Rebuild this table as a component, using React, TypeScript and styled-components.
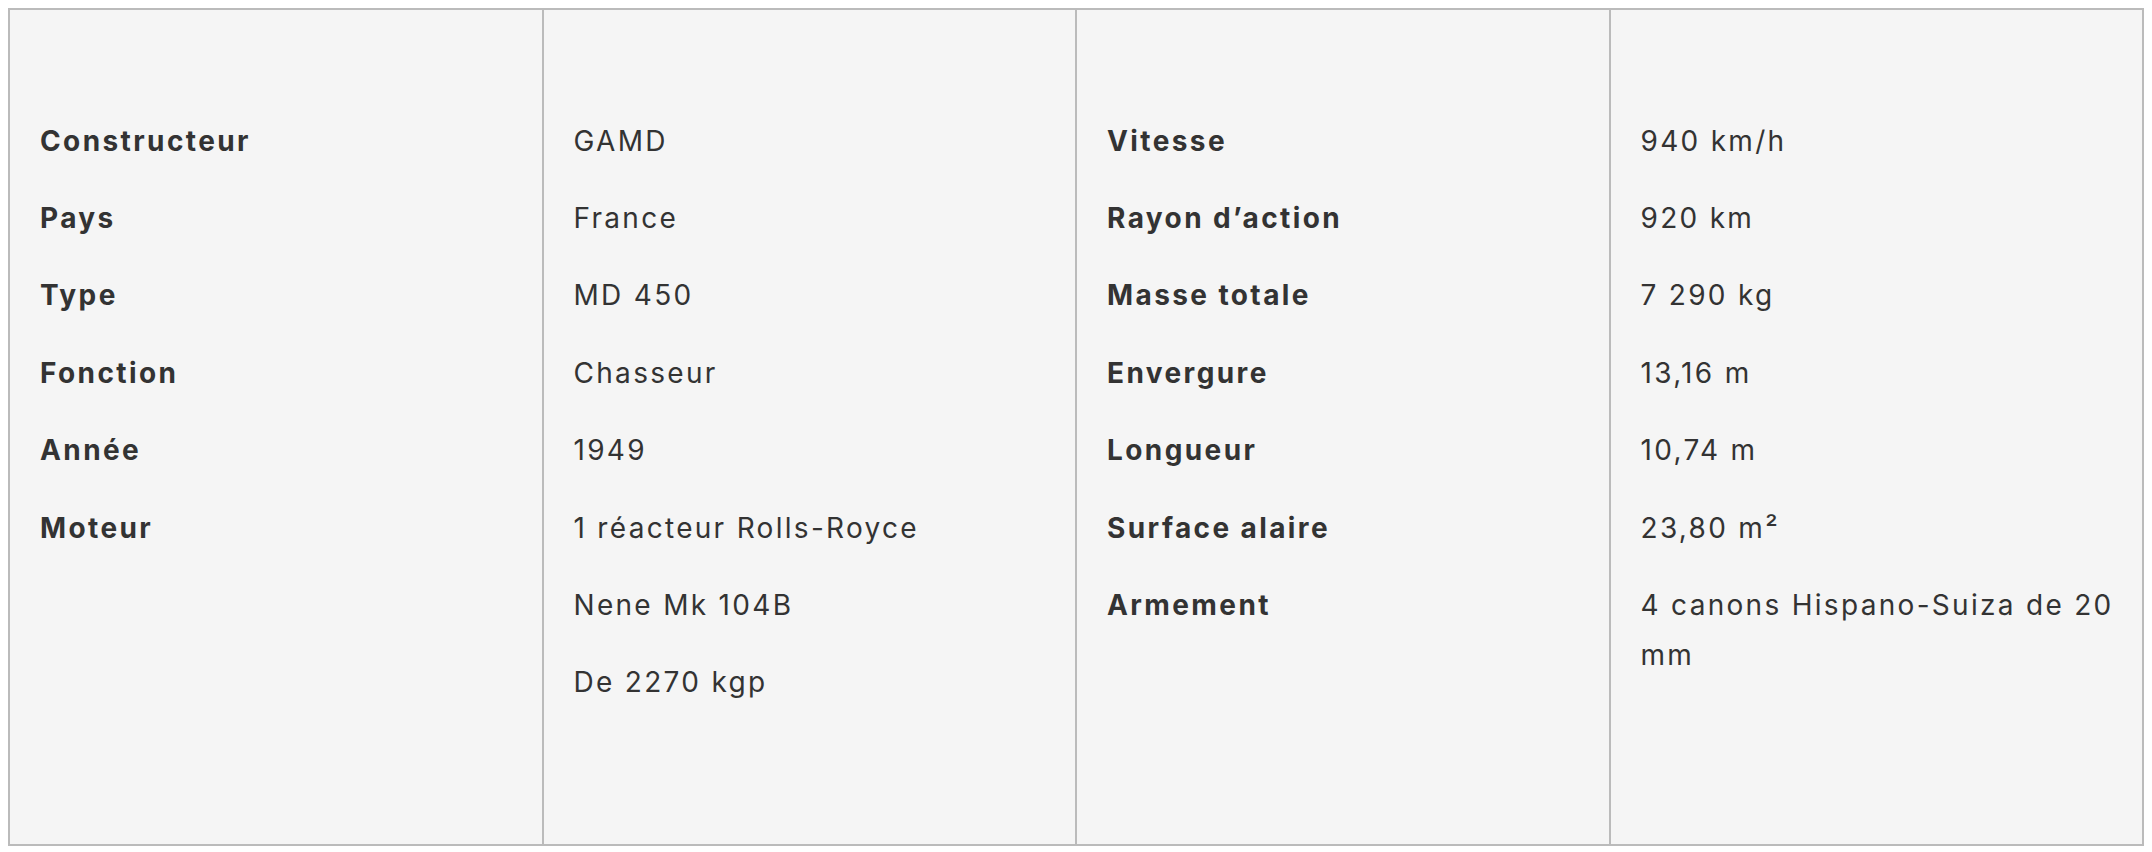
import React from "react";
import styled, { createGlobalStyle } from "styled-components";

const GlobalStyle = createGlobalStyle`
  html, body {
    margin: 0;
    padding: 0;
    background: #ffffff;
  }
  body {
    margin: 8px;
    font-family: Inter, "Noto Sans", "Liberation Sans", sans-serif;
  }
`;

const SpecTable = styled.table`
  width: 100%;
  border-collapse: collapse;
  table-layout: fixed;
  background: #f5f5f5;
  color: #333333;
  font-size: 28px;
  line-height: 50px;
  letter-spacing: 2.2px;
`;

const Cell = styled.td`
  border: 2px solid #bbbbbb;
  vertical-align: top;
  padding: 105.5px 24px 136.5px 30px;
`;

const Line = styled.p<{ $label?: boolean }>`
  margin: 0 0 27.43px;
  font-weight: ${(p) => (p.$label ? 700 : 400)};
  letter-spacing: ${(p) => (p.$label ? "2.4px" : "2.3px")};
  &:last-child {
    margin-bottom: 0;
  }
`;

type Col = { label: boolean; lines: string[] };

const columns: Col[] = [
  {
    label: true,
    lines: ["Constructeur", "Pays", "Type", "Fonction", "Année", "Moteur"],
  },
  {
    label: false,
    lines: [
      "GAMD",
      "France",
      "MD 450",
      "Chasseur",
      "1949",
      "1 réacteur Rolls-Royce",
      "Nene Mk 104B",
      "De 2270 kgp",
    ],
  },
  {
    label: true,
    lines: [
      "Vitesse",
      "Rayon d’action",
      "Masse totale",
      "Envergure",
      "Longueur",
      "Surface alaire",
      "Armement",
    ],
  },
  {
    label: false,
    lines: [
      "940 km/h",
      "920 km",
      "7 290 kg",
      "13,16 m",
      "10,74 m",
      "23,80 m²",
      "4 canons Hispano-Suiza de 20 mm",
    ],
  },
];

export default function App() {
  return (
    <>
      <GlobalStyle />
      <SpecTable>
        <tbody>
          <tr>
            {columns.map((col, i) => (
              <Cell key={i}>
                {col.lines.map((l) => (
                  <Line key={l} $label={col.label}>
                    {l}
                  </Line>
                ))}
              </Cell>
            ))}
          </tr>
        </tbody>
      </SpecTable>
    </>
  );
}
